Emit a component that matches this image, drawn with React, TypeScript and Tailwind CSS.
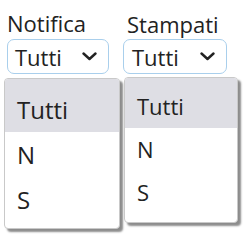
const options = ["Tutti", "N", "S"];

function Chevron() {
  return (
    <svg width="15" height="9" viewBox="0 0 15 9" className="shrink-0">
      <path d="M1.5 1.5 L7.5 7 L13.5 1.5" fill="none" stroke="#222" strokeWidth="2.4" strokeLinecap="round" strokeLinejoin="round" />
    </svg>
  );
}

export default function App() {
  return (
    <div className="h-[250px] w-[250px] overflow-hidden bg-white font-['Open_Sans',sans-serif] text-[#222]">
      <div className="flex pl-[4px] pt-[10px]">
        {/* Notifica */}
        <div className="flex w-[116px] flex-col">
          <div className="ml-[3px] text-[22px] leading-[26px]">Notifica</div>
          <div className="ml-[3px] mt-[3px] flex h-[35px] w-[102px] items-center justify-between rounded-[7px] border border-[#a9cfec] pl-[7px] pr-[11px] text-[22px] leading-[22px]">
            <span>Tutti</span>
            <Chevron />
          </div>
          <div className="mt-[4px] w-[116px] overflow-hidden rounded-[4px] border border-[#c9c9c9] bg-white pb-[6px] shadow-[3px_3px_2px_rgba(0,0,0,0.45)]">
            {options.map((o, i) => (
              <div
                key={o}
                className={`flex items-center pl-[12px] text-[24px] ${
                  i === 0 ? "h-[53px] bg-[#dedee4] pt-[8px]" : "h-[45px]"
                }`}
              >
                {o}
              </div>
            ))}
          </div>
        </div>

        {/* Stampati */}
        <div className="ml-[3px] flex w-[116px] flex-col">
          <div className="ml-[4px] mt-[1px] text-[22px] leading-[26px]">Stampati</div>
          <div className="mt-[2px] flex h-[35px] w-[104px] items-center justify-between rounded-[7px] border border-[#a9cfec] pl-[8px] pr-[11px] text-[22px] leading-[22px]">
            <span>Tutti</span>
            <Chevron />
          </div>
          <div className="ml-[1px] mt-[3px] w-[114px] overflow-hidden rounded-[4px] border border-[#c9c9c9] bg-white pb-[8px] shadow-[3px_3px_2px_rgba(0,0,0,0.45)]">
            {options.map((o, i) => (
              <div
                key={o}
                className={`flex items-center pl-[12px] text-[22px] ${
                  i === 0 ? "h-[50px] bg-[#dedee4] pt-[7px]" : "h-[43px]"
                }`}
              >
                {o}
              </div>
            ))}
          </div>
        </div>
      </div>
    </div>
  );
}
